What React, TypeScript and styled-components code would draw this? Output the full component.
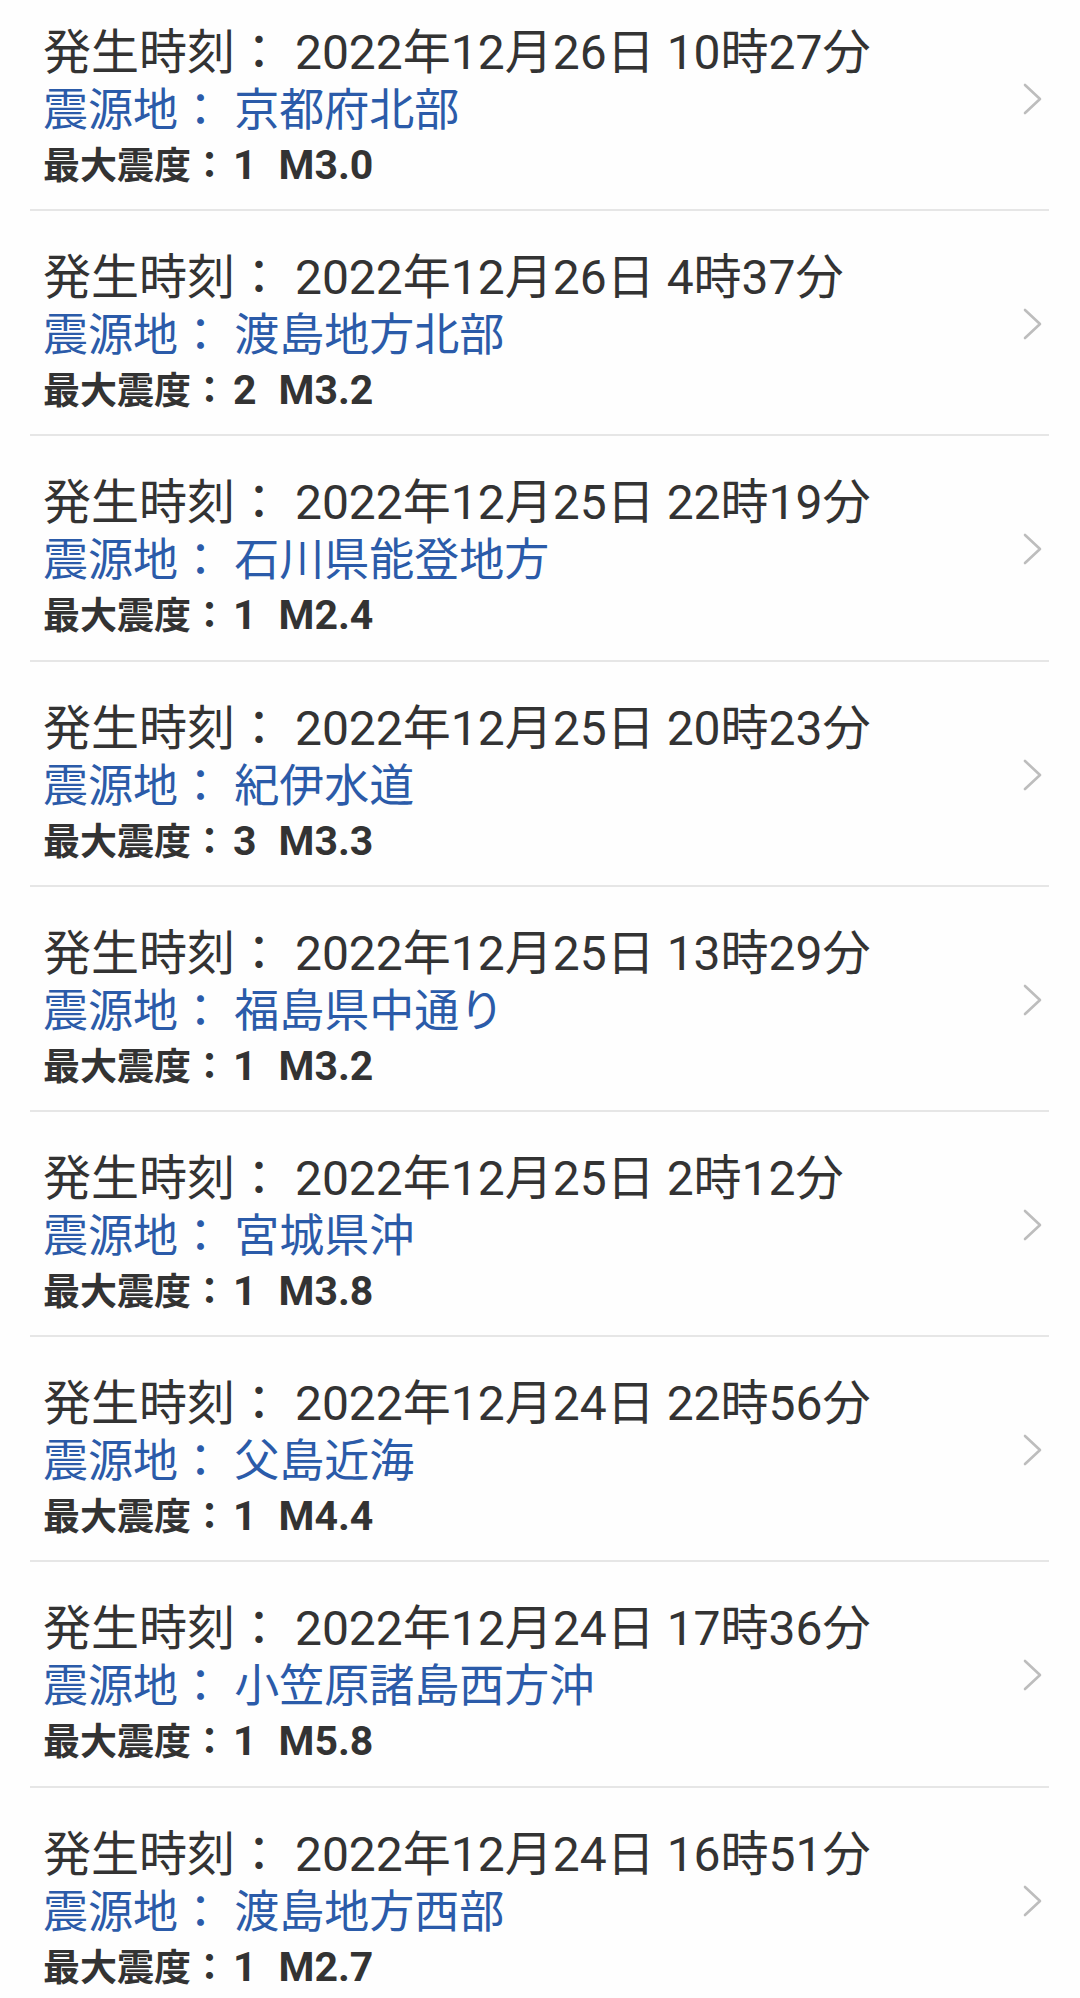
import React from 'react';
import styled, {createGlobalStyle} from 'styled-components';

const GlobalStyle = createGlobalStyle`
  html, body {
    margin: 0;
    padding: 0;
    background: #fefefe;
  }
  body {
    font-family: Roboto, "Noto Sans CJK JP", sans-serif;
    -webkit-font-smoothing: antialiased;
  }
`;

const Screen = styled.div`
  width: 1080px;
  height: 1998px;
  overflow: hidden;
  background: #fefefe;
`;

const QuakeList = styled.ul`
  list-style: none;
  margin: -14px 0 0 0;
  padding: 0;
`;

const QuakeRow = styled.li`
  box-sizing: border-box;
  height: 225.2px;
  margin: 0 31px 0 30px;
  padding: 0 7px 0 13px;
  display: flex;
  border-bottom: 2px solid #e6e6e6;
`;

const Info = styled.div`
  flex: 1;
  display: flex;
  flex-direction: column;
  padding-top: 38px;
`;

const TimeLine = styled.div`
  font-size: 48px;
  line-height: 58px;
  color: #333333;
  white-space: pre;
`;

const PlaceLine = styled.div`
  font-size: 45px;
  line-height: 57px;
  color: #2b5ba9;
  white-space: pre;
`;

const IntensityLine = styled.div`
  font-size: 37px;
  line-height: 53px;
  font-weight: 700;
  color: #333333;
  white-space: pre;
`;

const Value = styled.span<{$gap: number}>`
  font-size: 41px;
  margin-left: ${p => p.$gap}px;
`;

const Chevron = styled.svg`
  flex: none;
  align-self: center;
  width: 19px;
  height: 32px;
  margin-top: 3px;
`;

type Quake = {
  time: string;
  place: string;
  intensity: string;
  magnitude: string;
};

const quakes: Quake[] = [
  {time: '2022年12月26日 10時27分', place: '京都府北部', intensity: '1', magnitude: 'M3.0'},
  {time: '2022年12月26日 4時37分', place: '渡島地方北部', intensity: '2', magnitude: 'M3.2'},
  {time: '2022年12月25日 22時19分', place: '石川県能登地方', intensity: '1', magnitude: 'M2.4'},
  {time: '2022年12月25日 20時23分', place: '紀伊水道', intensity: '3', magnitude: 'M3.3'},
  {time: '2022年12月25日 13時29分', place: '福島県中通り', intensity: '1', magnitude: 'M3.2'},
  {time: '2022年12月25日 2時12分', place: '宮城県沖', intensity: '1', magnitude: 'M3.8'},
  {time: '2022年12月24日 22時56分', place: '父島近海', intensity: '1', magnitude: 'M4.4'},
  {time: '2022年12月24日 17時36分', place: '小笠原諸島西方沖', intensity: '1', magnitude: 'M5.8'},
  {time: '2022年12月24日 16時51分', place: '渡島地方西部', intensity: '1', magnitude: 'M2.7'},
];

function ChevronIcon() {
  return (
    <Chevron viewBox="0 0 19 32">
      <path d="M2 2 L17 16 L2 30" fill="none" stroke="#bdbdbd" strokeWidth="2.6" strokeLinecap="round" strokeLinejoin="round" />
    </Chevron>
  );
}

function QuakeItem({quake}: {quake: Quake}) {
  return (
    <QuakeRow>
      <Info>
        <TimeLine>{`発生時刻： ${quake.time}`}</TimeLine>
        <PlaceLine>{`震源地： ${quake.place}`}</PlaceLine>
        <IntensityLine>
          最大震度：
          <Value $gap={5}>{quake.intensity}</Value>
          <Value $gap={22}>{quake.magnitude}</Value>
        </IntensityLine>
      </Info>
      <ChevronIcon />
    </QuakeRow>
  );
}

export default function App() {
  return (
    <Screen>
      <GlobalStyle />
      <QuakeList>
        {quakes.map(q => (
          <QuakeItem key={q.time} quake={q} />
        ))}
      </QuakeList>
    </Screen>
  );
}
